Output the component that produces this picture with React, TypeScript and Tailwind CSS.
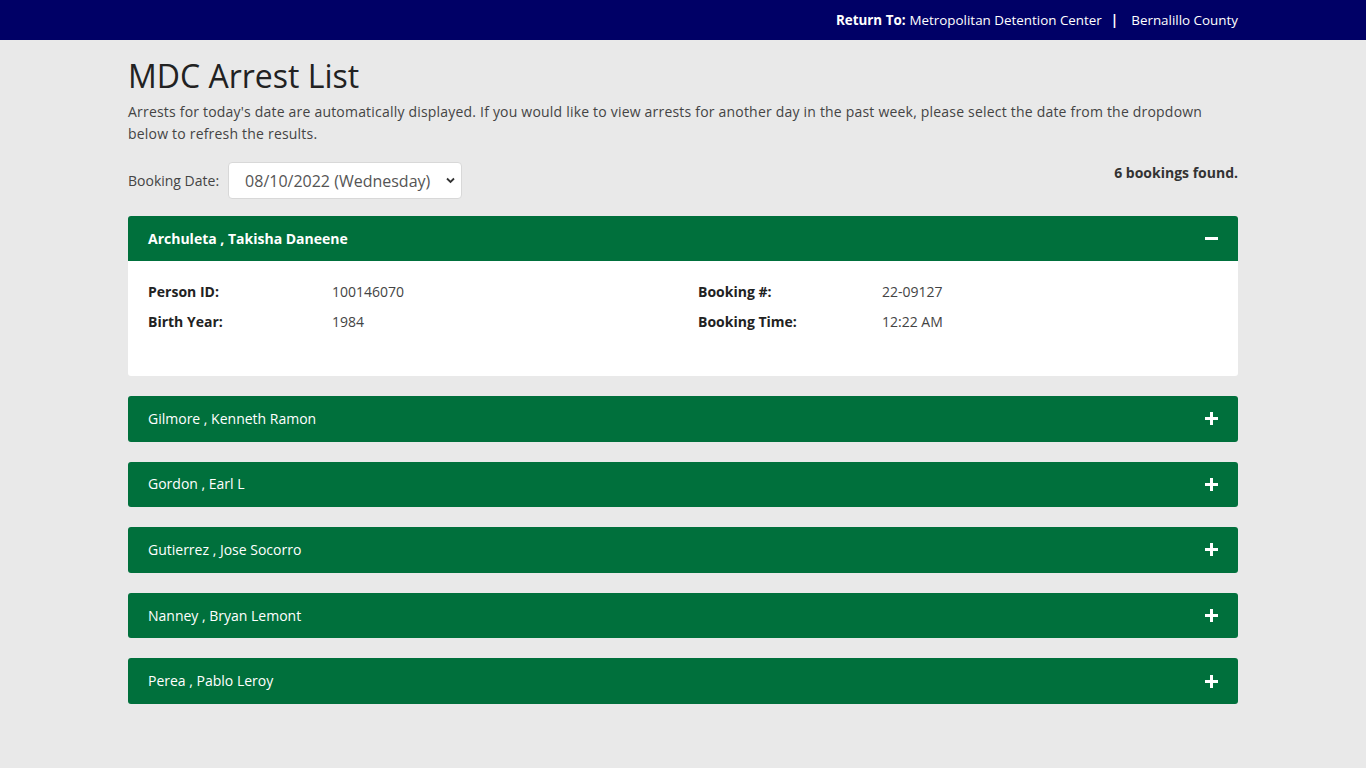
import { useState } from 'react'

const bookings = [
    { name: 'Archuleta , Takisha Daneene', personId: '100146070', birthYear: '1984', bookingNo: '22-09127', bookingTime: '12:22 AM' },
    { name: 'Gilmore , Kenneth Ramon', personId: '', birthYear: '', bookingNo: '', bookingTime: '' },
    { name: 'Gordon , Earl L', personId: '', birthYear: '', bookingNo: '', bookingTime: '' },
    { name: 'Gutierrez , Jose Socorro', personId: '', birthYear: '', bookingNo: '', bookingTime: '' },
    { name: 'Nanney , Bryan Lemont', personId: '', birthYear: '', bookingNo: '', bookingTime: '' },
    { name: 'Perea , Pablo Leroy', personId: '', birthYear: '', bookingNo: '', bookingTime: '' },
]

function PlusIcon() {
    return (
        <svg width="13" height="13" viewBox="0 0 13 13">
            <rect x="0" y="5" width="13" height="3" fill="white" />
            <rect x="5" y="0" width="3" height="13" fill="white" />
        </svg>
    )
}

function MinusIcon() {
    return (
        <svg width="13" height="13" viewBox="0 0 13 13">
            <rect x="0" y="5" width="13" height="3" fill="white" />
        </svg>
    )
}

export default function App() {
    const [open, setOpen] = useState<number | null>(0)

    return (
        <div className="min-h-screen bg-[#e9e9e9] text-[#333] font-['Open_Sans',sans-serif]">
            {/* Top bar */}
            <div className="h-10 bg-[#000066] text-white text-[13.4px]">
                <div className="mx-auto w-[1110px] h-full flex items-center justify-end pt-[1px]">
                    <span className="font-bold mr-1">Return To:</span>
                    <span>Metropolitan Detention Center</span>
                    <span className="font-bold ml-[9px] mr-[13px]">|</span>
                    <span>Bernalillo County</span>
                </div>
            </div>

            <main className="mx-auto w-[1110px] pt-[15px] pb-16">
                <h1 className="text-[32px] leading-[42px] text-[#222] mb-[4px]">MDC Arrest List</h1>
                <p className="text-sm leading-[22px] text-[#444] tracking-[0.2px] mt-[1px]">
                    Arrests for today's date are automatically displayed. If you would like to view arrests for another day in the past week, please select the date from the dropdown below to refresh the results.
                </p>

                <div className="flex items-start justify-between mt-[17px] mb-[17px]">
                    <div className="flex items-center">
                        <label className="text-sm text-[#444] mr-[9px]">Booking Date:</label>
                        <div className="relative w-[234px] h-[37px] bg-white border border-[#d8d8d8] rounded-[4px] flex items-center pl-[16px] text-base text-[#555]">
                            <span>08/10/2022 (Wednesday)</span>
                            <svg className="absolute right-[6px] top-[14px]" width="9" height="7" viewBox="0 0 9 7">
                                <path d="M1 1.5 L4.5 5 L8 1.5" stroke="#333" strokeWidth="1.8" fill="none" />
                            </svg>
                        </div>
                    </div>
                    <div className="text-sm font-bold text-[#333] pt-[1px]">6 bookings found.</div>
                </div>

                <div className="flex flex-col gap-5">
                    {bookings.map((b, i) => {
                        const isOpen = open === i
                        return (
                            <div key={b.name} className="rounded-[3px] overflow-hidden">
                                <button
                                    onClick={() => setOpen(isOpen ? null : i)}
                                    className={`w-full flex items-center justify-between bg-[#00703c] text-white text-sm pl-5 pr-[20px] text-left ${isOpen ? 'h-[45px] font-bold' : 'h-[45.6px] font-[500]'}`}
                                >
                                    <span>{b.name}</span>
                                    {isOpen ? <MinusIcon /> : <PlusIcon />}
                                </button>
                                {isOpen && (
                                    <div className="bg-white h-[115px] px-5 pt-[21px] text-sm">
                                        <div className="grid grid-cols-[184px_366px_184px_1fr] gap-y-[10px] leading-5">
                                            <div className="font-bold text-[#222]">Person ID:</div>
                                            <div className="text-[#444]">{b.personId}</div>
                                            <div className="font-bold text-[#222]">Booking #:</div>
                                            <div className="text-[#444]">{b.bookingNo}</div>
                                            <div className="font-bold text-[#222]">Birth Year:</div>
                                            <div className="text-[#444]">{b.birthYear}</div>
                                            <div className="font-bold text-[#222]">Booking Time:</div>
                                            <div className="text-[#444]">{b.bookingTime}</div>
                                        </div>
                                    </div>
                                )}
                            </div>
                        )
                    })}
                </div>
            </main>
        </div>
    )
}
